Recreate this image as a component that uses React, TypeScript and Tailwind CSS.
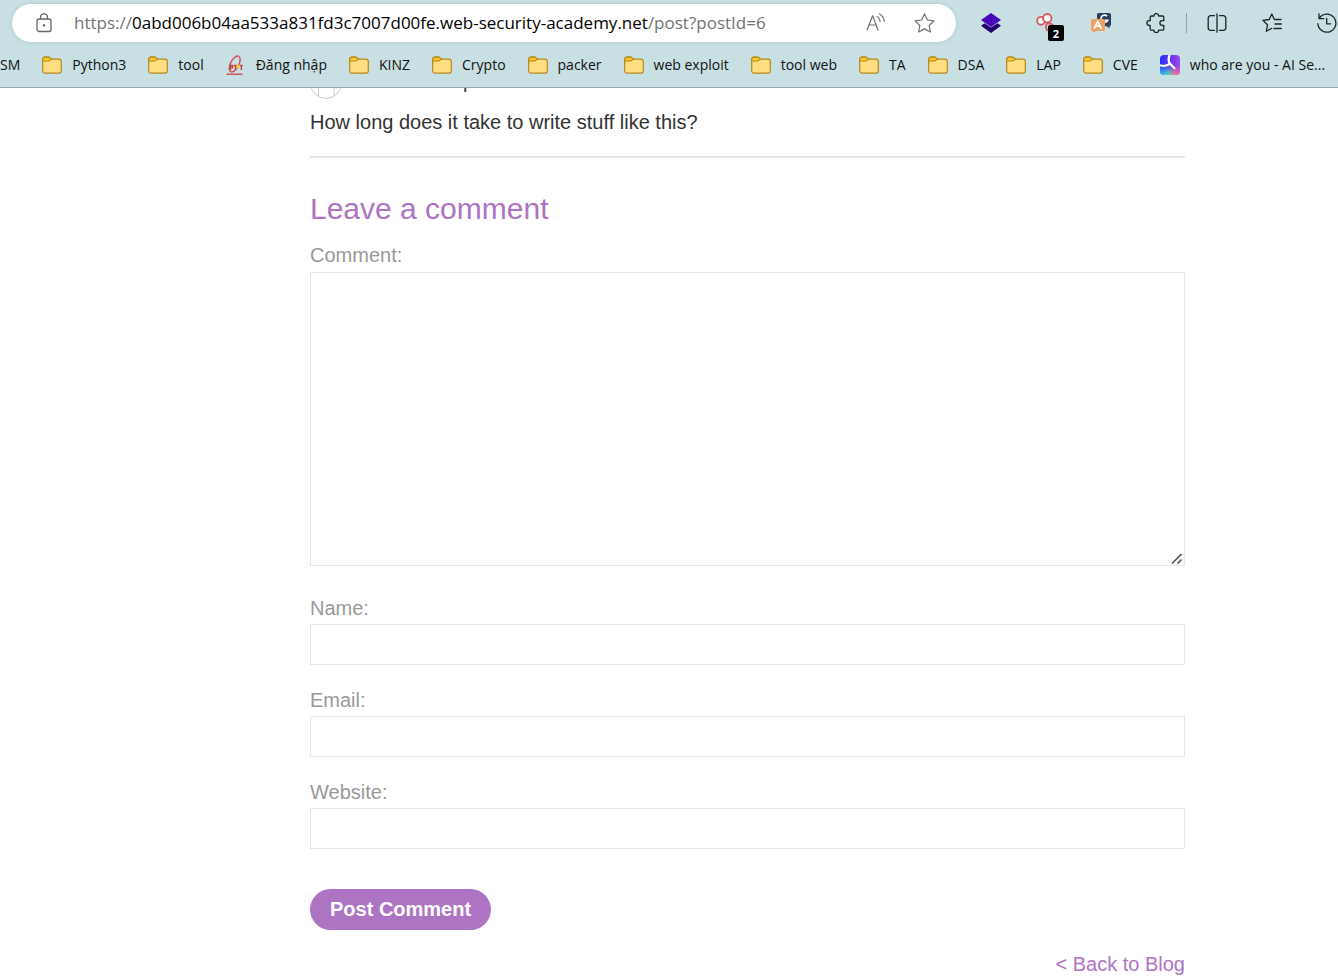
import type { ReactNode } from 'react';

function FolderIcon() {
  return (
    <svg width="20" height="20" viewBox="0 0 20 20" fill="none" className="shrink-0">
      <path
        d="M.7 4.4A2.2 2.2 0 0 1 2.900 2.200H6.300C7 2.200 7.500 2.400 8 2.900L9.300 4.100H17a2.300 2.300 0 0 1 2.300 2.300V15.800A2.300 2.300 0 0 1 17 18.100H3A2.300 2.300 0 0 1 .7 15.800Z"
        fill="#ffde82"
        stroke="#b5881b"
        strokeWidth="1.2"
      />
      <path
        d="M.7 5.800V4.400A2.200 2.200 0 0 1 2.900 2.200H6.300C7 2.200 7.500 2.400 8 2.900L9.300 4.100 7.800 5.400C7.400 5.800 7 6 6.400 6H.7Z"
        fill="#ffca28"
        stroke="#b5881b"
        strokeWidth="1.2"
      />
    </svg>
  );
}

function PtitIcon() {
  return (
    <svg width="20" height="20" viewBox="0 0 20 20" fill="none" className="shrink-0">
      <ellipse cx="8.700" cy="9" rx="4.200" ry="8.700" transform="rotate(27 8.700 9)" stroke="#d0484b" strokeWidth="1.300" />
      <path d="M4.500 15V10.500h2.200v2.200H4.500M8 10.500h3M9.500 10.500V15M13.800 10.500h3M15.300 10.500V15" stroke="#c93b3f" strokeWidth="1.300" />
      <path d="m12 8.500.8 1.800 1.700.4-1.400 1.200.1 2-1.500-1-1.500.8.500-1.900-1.200-1.200 1.700-.2Z" fill="#f4d51f" />
      <path d="M.5 19.200h16" stroke="#c93b3f" strokeWidth="1.200" />
    </svg>
  );
}

function SearchAppIcon() {
  return (
    <svg width="20" height="20" viewBox="0 0 20 20" className="shrink-0">
      <defs>
        <linearGradient id="app-base" x1="0" y1="0" x2="1" y2="0">
          <stop offset="0" stopColor="#2530ff" />
          <stop offset=".55" stopColor="#6a35ee" />
          <stop offset="1" stopColor="#9b4be8" />
        </linearGradient>
        <linearGradient id="app-low" x1="0" y1="0" x2="1" y2="0">
          <stop offset="0" stopColor="#20c8ff" />
          <stop offset=".45" stopColor="#54dcae" />
          <stop offset=".75" stopColor="#ff7b86" />
          <stop offset="1" stopColor="#f45bb5" />
        </linearGradient>
        <linearGradient id="app-fade" x1="0" y1="0" x2="0" y2="1">
          <stop offset=".5" stopColor="#000" />
          <stop offset="1" stopColor="#fff" />
        </linearGradient>
        <mask id="app-mask">
          <rect width="20" height="20" fill="url(#app-fade)" />
        </mask>
      </defs>
      <rect width="20" height="20" rx="4" fill="url(#app-base)" />
      <rect width="20" height="20" rx="4" fill="url(#app-low)" mask="url(#app-mask)" />
      <path d="M9.300.8C8.300 4 8.500 6.500 9.800 8.500 7.500 11 4.500 11.300 1 10.500M9.800 8.500l4.700 4.800" fill="none" stroke="#fff" strokeWidth="2.300" strokeLinecap="round" />
    </svg>
  );
}

function LockIcon() {
  return (
    <svg width="16" height="20" viewBox="0 0 16 20" fill="none" stroke="#666" strokeWidth="1.300" className="shrink-0">
      <rect x="1" y="6" width="14" height="12.500" rx="2" />
      <path d="M4.500 6V4.300a3.500 3.500 0 0 1 7 0V6" />
      <circle cx="8" cy="12.300" r="1.200" fill="#666" stroke="none" />
    </svg>
  );
}

function ReadAloudIcon() {
  return (
    <svg width="20" height="20" viewBox="0 0 20 20" fill="none" stroke="#707070" strokeWidth="1.200" strokeLinecap="round" strokeLinejoin="round">
      <path d="M1 17 6.600 2.800l5.400 14.200M3 12h7.200M11 3.600c1.800 1 2.900 2.700 3.200 5M13.500 1c2.800 1.600 4.500 4.200 4.900 7.500" />
    </svg>
  );
}

function StarIcon() {
  return (
    <svg width="21" height="20" viewBox="0 0 21 20" fill="none" stroke="#707070" strokeWidth="1.200" strokeLinejoin="round">
      <path d="m10.500 1 2.900 6 6.600.9-4.800 4.600 1.200 6.500-5.900-3.100L4.600 19l1.200-6.500L1 7.900 7.600 7Z" />
    </svg>
  );
}

function LayersIcon() {
  return (
    <svg width="20" height="20" viewBox="0 0 20 20">
      <path d="m0 12.700 3.500-2.400 6.500 4.300 6.500-4.300 3.500 2.400-10 7.300Z" fill="#22006f" />
      <path d="m10 0 10 7-10 7-10-7Z" fill="#4b05b8" />
    </svg>
  );
}

function ClipIcon() {
  return (
    <svg width="20" height="20" viewBox="0 0 20 20" fill="#fff" stroke="#d65a5e" strokeWidth="1.900">
      <path d="M11 10.500c-1.500 2.500-1 5.500.5 7.500M11 10.500c4-.5 6.500 1.500 8 4" fill="none" />
      <circle cx="5" cy="7.800" r="3.900" />
      <circle cx="11.300" cy="5.200" r="4.200" />
    </svg>
  );
}

function TranslateIcon() {
  return (
    <svg width="20" height="20" viewBox="0 0 20 20" fill="none">
      <path d="M7.500 0h10.800A1.700 1.700 0 0 1 20 1.700v10a1.700 1.700 0 0 1-1.500 1.600V15.500l-2.800-2.200H6V1.700A1.700 1.700 0 0 1 7.500 0Z" fill="#2c3f61" />
      <path d="M16 3.100a3.600 3.600 0 1 0 .7 4.200h-3" stroke="#fff" strokeWidth="1.600" />
      <path d="M1.500 6h11A1.500 1.500 0 0 1 14 7.500v9a1.500 1.500 0 0 1-1.500 1.500H5.200L2 20v-2H1.500A1.500 1.500 0 0 1 0 16.500v-9A1.500 1.500 0 0 1 1.500 6Z" fill="#eba263" />
      <path d="m3 15.800 3.700-7.500 3.800 7.500M4.200 13.300h5" stroke="#fff" strokeWidth="1.600" />
    </svg>
  );
}

function PuzzleIcon() {
  return (
    <svg width="20" height="20" viewBox="0 0 20 20" fill="none" stroke="#1c2426" strokeWidth="1.300" strokeLinejoin="round">
      <path d="M5.500 3H7.900a2.400 2.400 0 0 1 4.800 0H16.500a1.300 1.300 0 0 1 1.300 1.300V7.700H16.300a2.400 2.400 0 0 0 0 4.800H17.800V15.900a1.300 1.300 0 0 1-1.300 1.300H12.700a2.400 2.400 0 0 1-4.800 0H5.500a1.300 1.300 0 0 1-1.300-1.300V12.500H3.300a2.400 2.400 0 0 1 0-4.800H4.200V4.300A1.300 1.300 0 0 1 5.500 3Z" />
    </svg>
  );
}

function SplitIcon() {
  return (
    <svg width="20" height="20" viewBox="0 0 20 20" fill="none" stroke="#1c2426" strokeWidth="1.300" strokeLinecap="round">
      <path d="M7.500 2.700H3.700A2.500 2.500 0 0 0 1.200 5.200v9.600a2.500 2.500 0 0 0 2.500 2.500h3.800M12.500 2.700h3.800a2.500 2.500 0 0 1 2.500 2.500v9.600a2.500 2.500 0 0 1-2.500 2.500h-3.800M10 .8v18.400" />
    </svg>
  );
}

function FavoritesIcon() {
  return (
    <svg width="20" height="20" viewBox="0 0 20 20" fill="none" stroke="#1c2426" strokeWidth="1.300" strokeLinecap="round" strokeLinejoin="round">
      <path d="M19 6.500h-6.600L9.800 1 7.200 6.500.9 7.300l4.600 4.500-1.200 6.500 5.500-3M13 11h6.300M12 15.500h7.300" />
    </svg>
  );
}

function HistoryIcon() {
  return (
    <svg width="20" height="20" viewBox="0 0 20 20" fill="none" stroke="#1c2426" strokeWidth="1.300" strokeLinecap="round" strokeLinejoin="round">
      <path d="M2 .8v4.800h4.800M2.300 5.300a9 9 0 1 1-1.400 5.300M9.700 5.500v5.300h4" />
    </svg>
  );
}

function ToolButton({ label, children }: { label: string; children: ReactNode }) {
  return (
    <button type="button" aria-label={label} className="relative size-5 shrink-0">
      {children}
    </button>
  );
}

const bookmarks: { name: string; icon?: ReactNode }[] = [
  { name: 'Python3' },
  { name: 'tool' },
  { name: 'Đăng nhập', icon: <PtitIcon /> },
  { name: 'KINZ' },
  { name: 'Crypto' },
  { name: 'packer' },
  { name: 'web exploit' },
  { name: 'tool web' },
  { name: 'TA' },
  { name: 'DSA' },
  { name: 'LAP' },
  { name: 'CVE' },
  { name: 'who are you - AI Se...', icon: <SearchAppIcon /> },
];

function BrowserHeader() {
  return (
    <header className="border-b border-[#8fa8ad] bg-[#c8dfe3] pt-1 font-['Open_Sans','Noto_Sans',sans-serif]">
      <div className="flex items-center pr-px pl-3">
        <div className="flex h-[38px] min-w-0 flex-1 items-center rounded-full bg-white pr-[21px] pl-6 shadow-[0_0_4px_rgba(80,120,130,0.2)]">
          <LockIcon />
          <div className="ml-[22px] min-w-0 flex-1 truncate text-[17px] text-[#737373]">
            https://<span className="text-black">0abd006b04aa533a831fd3c7007d00fe.web-security-academy.net</span>/post?postId=6
          </div>
          <button type="button" aria-label="Read aloud" className="mr-7 shrink-0">
            <ReadAloudIcon />
          </button>
          <button type="button" aria-label="Add to favorites" className="shrink-0">
            <StarIcon />
          </button>
        </div>
        <div className="ml-[25px] flex items-center gap-[35px]">
          <ToolButton label="Layers"><LayersIcon /></ToolButton>
          <ToolButton label="Clips">
            <ClipIcon />
            <span className="absolute top-3 left-3 flex size-4 items-center justify-center rounded-xs bg-black text-[11px] leading-none font-bold text-white">2</span>
          </ToolButton>
          <ToolButton label="Translate"><TranslateIcon /></ToolButton>
          <ToolButton label="Extensions"><PuzzleIcon /></ToolButton>
        </div>
        <div className="mx-5 h-5 w-px bg-[#8fa3a8]" />
        <div className="flex items-center gap-[35px]">
          <ToolButton label="Split screen"><SplitIcon /></ToolButton>
          <ToolButton label="Favorites"><FavoritesIcon /></ToolButton>
          <ToolButton label="History"><HistoryIcon /></ToolButton>
        </div>
      </div>
      <nav className="flex h-[45px] items-center gap-[22px] overflow-hidden text-sm whitespace-nowrap text-[#111]">
        <a href="#sm">SM</a>
        {bookmarks.map((b) => (
          <a key={b.name} href="#bookmark" className="flex shrink-0 items-center gap-[10px]">
            {b.icon ?? <FolderIcon />}
            {b.name}
          </a>
        ))}
      </nav>
    </header>
  );
}

function Field({ id, label, type = 'text' }: { id: string; label: string; type?: string }) {
  return (
    <div>
      <label htmlFor={id} className="mb-1 block leading-6 text-[#999]">{label}</label>
      <input id={id} type={type} className="block h-[41px] w-full border border-[#e5e5e5] px-2 text-[#333] outline-none" />
    </div>
  );
}

export default function App() {
  return (
    <div className="bg-white">
      <BrowserHeader />
      <main className="pr-[153px] pl-[310px] font-['Liberation_Sans',Arial,sans-serif] text-xl leading-6 text-[#333]">
        <div className="flex h-[11px] items-end overflow-hidden">
          <svg width="32" height="32" viewBox="0 0 32 32" fill="none" stroke="#ccc" className="shrink-0">
            <circle cx="16" cy="16" r="15.500" />
            <path d="M8.500 20v9.500M24 20v9.500" />
          </svg>
          <span className="mb-2 ml-[121px] leading-none">p</span>
        </div>
        <p className="mt-[11px]">How long does it take to write stuff like this?</p>
        <hr className="mt-[22px] border-t-2 border-[#e5e5e5]" />
        <form onSubmit={(e) => e.preventDefault()}>
          <h2 className="mt-[33px] text-3xl leading-9 text-[#ad74c3]">Leave a comment</h2>
          <label htmlFor="comment" className="mt-4 mb-[5px] block text-[#999]">Comment:</label>
          <div className="relative">
            <textarea id="comment" className="block h-[294px] w-full resize-none border border-[#e5e5e5] p-2 outline-none" />
            <svg width="12" height="12" viewBox="0 0 12 12" stroke="#555" strokeWidth="1.700" className="pointer-events-none absolute right-[2px] bottom-px">
              <path d="M1 10.500 10.500 1M6.500 10.500l4-4" />
            </svg>
          </div>
          <div className="mt-[30px] flex flex-col gap-[23px]">
            <Field id="name" label="Name:" />
            <Field id="email" label="Email:" type="email" />
            <Field id="website" label="Website:" />
          </div>
          <button type="submit" className="mt-10 block h-[41px] rounded-full bg-[#ad74c3] px-5 pb-0.5 font-bold text-white">
            Post Comment
          </button>
        </form>
        <div className="mt-[22px] text-right">
          <a href="#blog" className="block text-[#ad74c3]">&lt; Back to Blog</a>
        </div>
      </main>
    </div>
  );
}
